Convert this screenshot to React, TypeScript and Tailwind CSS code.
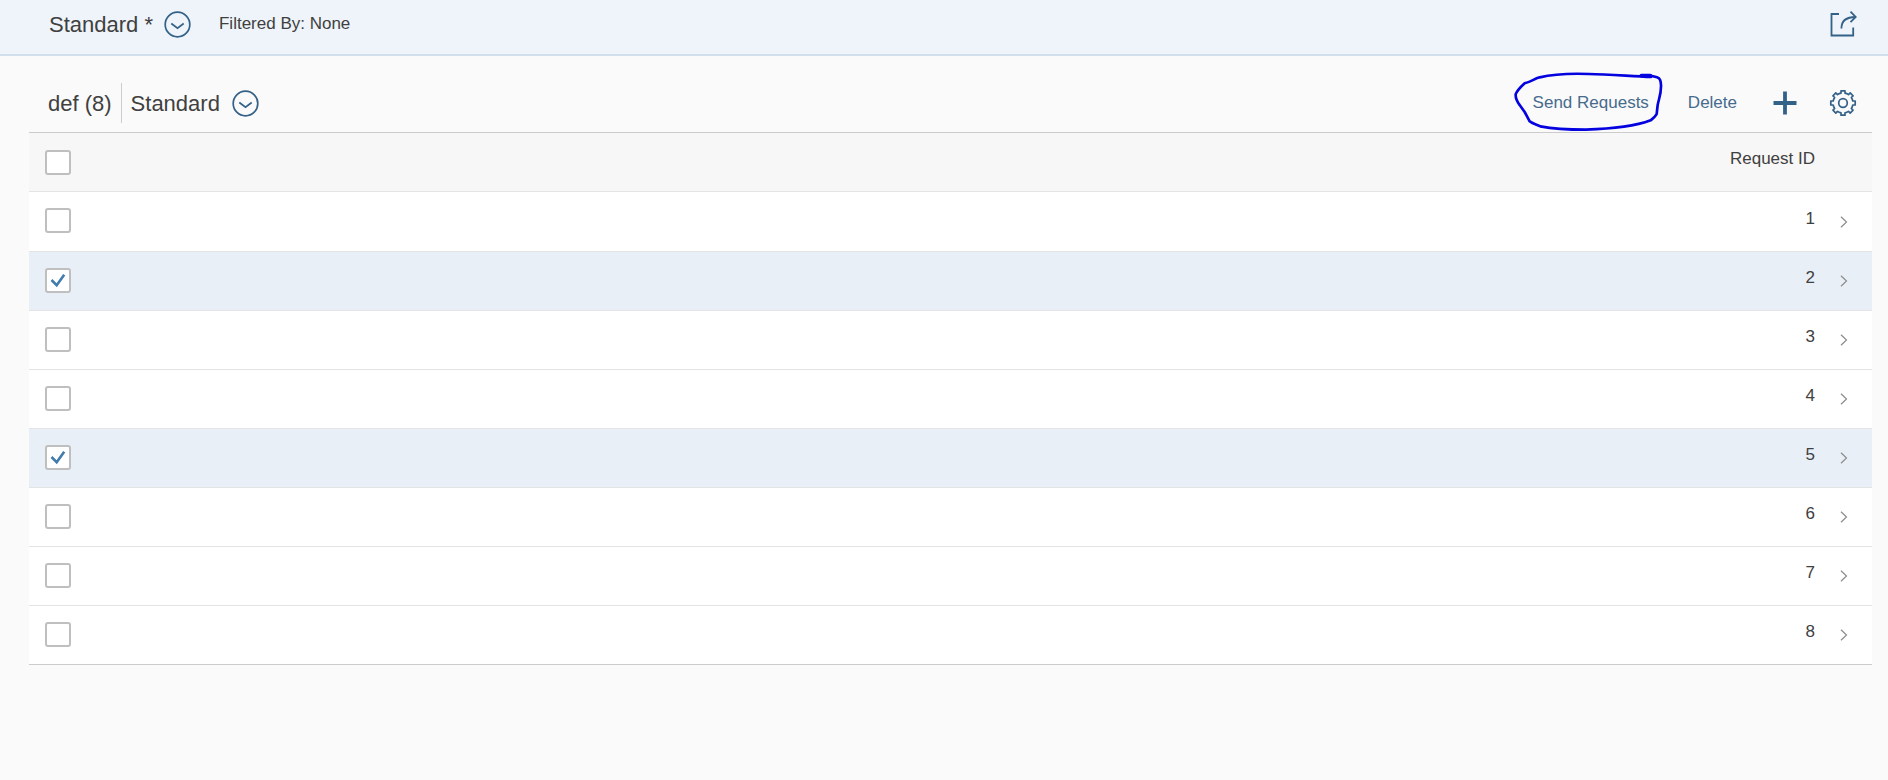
import { useState } from "react";

const INITIAL_ROWS = [
  { id: 1, selected: false },
  { id: 2, selected: true },
  { id: 3, selected: false },
  { id: 4, selected: false },
  { id: 5, selected: true },
  { id: 6, selected: false },
  { id: 7, selected: false },
  { id: 8, selected: false },
];

function VariantIcon() {
  return (
    <svg
      viewBox="0 0 27 27"
      className="size-[27px]"
      fill="none"
      stroke="currentColor"
      strokeWidth="1.7"
    >
      <circle cx="13.5" cy="13.5" r="12.3" />
      <path d="M7.3 12.500l6.200 4.700 6.200-4.700" />
    </svg>
  );
}

function ShareIcon() {
  return (
    <svg
      viewBox="0 0 28 28"
      className="size-7"
      fill="none"
      stroke="currentColor"
      strokeWidth="1.8"
    >
      <path d="M10 4H2.500v21.500h21.700v-8" />
      <path d="M12.400 18.500C12.400 11.500 17 7 26.500 7" />
      <path d="M21.500 1.600l5.200 5.400-5.200 5.200" />
    </svg>
  );
}

function PlusIcon() {
  return (
    <svg
      viewBox="0 0 24 24"
      className="size-6"
      fill="none"
      stroke="currentColor"
      strokeWidth="3.8"
    >
      <path d="M12 .5v23M.5 12h23" />
    </svg>
  );
}

function GearIcon() {
  return (
    <svg
      viewBox="0 0 28 28"
      className="size-7"
      fill="none"
      stroke="currentColor"
      strokeWidth="1.7"
      strokeLinejoin="round"
    >
      <path d="M12 4.200V1.800H16V4.200A10 10 0 0 1 19.520 5.660L21.210 3.960 24.040 6.790 22.340 8.480A10 10 0 0 1 23.800 12H26.200V16H23.800A10 10 0 0 1 22.340 19.520L24.040 21.210 21.210 24.040 19.520 22.340A10 10 0 0 1 16 23.800V26.200H12V23.800A10 10 0 0 1 8.480 22.340L6.790 24.040 3.960 21.210 5.660 19.520A10 10 0 0 1 4.200 16H1.800V12H4.200A10 10 0 0 1 5.660 8.480L3.960 6.790 6.790 3.960 8.480 5.660A10 10 0 0 1 12 4.200Z" />
      <circle cx="14" cy="14" r="4.300" />
    </svg>
  );
}

// Freehand ring drawn round the send button
function Marker() {
  return (
    <svg
      viewBox="0 0 540 240"
      className="pointer-events-none absolute -top-[23px] -left-[34px] h-20 w-[180px] max-w-none"
      fill="none"
      stroke="#0502e0"
      strokeWidth="8"
      strokeLinecap="round"
      strokeLinejoin="round"
    >
      <path d="M456 51C400 49 330 43 270 42C215 40 160 43 122 52C105 57 96 65 77 70C66 80 55 90 50 103C49 118 56 127 62 135L77 156L92 184C100 191 112 193 124 199C165 207 215 209 260 209C330 207 400 202 455 181C464 174 470 168 473 162L476 135C480 115 487 100 486 75C485 62 484 55 474 52L456 47" />
      <path d="M427 47h27" strokeWidth="11" />
    </svg>
  );
}

type CheckBoxProps = {
  label: string;
  checked: boolean;
  onChange: (checked: boolean) => void;
};

function CheckBox({ label, checked, onChange }: CheckBoxProps) {
  return (
    <label className="relative block h-[25px] w-[26px]">
      <input
        type="checkbox"
        aria-label={label}
        checked={checked}
        onChange={(e) => onChange(e.target.checked)}
        className="block h-full w-full appearance-none rounded-[3px] border-2 border-[#bfbfbf] bg-white"
      />
      {checked && (
        <svg
          viewBox="0 0 26 25"
          className="pointer-events-none absolute inset-0"
          fill="none"
          stroke="#427cac"
          strokeWidth="2.6"
        >
          <path d="M6.500 12l5.200 5.200L19.200 6.800" />
        </svg>
      )}
    </label>
  );
}

export default function App() {
  const [rows, setRows] = useState(INITIAL_ROWS);

  const toggle = (id: number, selected: boolean) =>
    setRows(rows.map((row) => (row.id === id ? { ...row, selected } : row)));

  return (
    <div className="min-h-screen bg-[#fafafa] font-['Liberation_Sans',Arial,sans-serif] text-[17px] text-[#404040]">
      <header className="flex h-14 items-center border-b-2 border-[#d1e0ec] bg-[#eef4f9] pr-[31px] pb-1.5 pl-[49px]">
        <h1 className="text-[22px]">Standard *</h1>
        <button aria-label="Select view" className="ml-[11px] text-[#346187]">
          <VariantIcon />
        </button>
        <p className="ml-7">Filtered By: None</p>
        <button aria-label="Share" className="ml-auto text-[#346187]">
          <ShareIcon />
        </button>
      </header>

      <main className="pr-4 pl-[29px]">
        <div className="flex h-19 items-center pt-[18px] pr-[15px] pl-[19px]">
          <h2 className="text-[22px]">def (8)</h2>
          <div className="ml-[9px] h-10 w-px bg-[#ccc]" />
          <h3 className="ml-[9px] text-[22px]">Standard</h3>
          <button aria-label="Select table view" className="ml-3 text-[#346187]">
            <VariantIcon />
          </button>
          <div className="ml-auto flex items-center text-[#346187]">
            <div className="relative mr-[39px]">
              <button className="block h-10 text-[#466b8d]">Send Requests</button>
              <Marker />
            </div>
            <button className="mr-9 h-10 text-[#466b8d]">Delete</button>
            <button aria-label="Add" className="mr-8">
              <PlusIcon />
            </button>
            <button aria-label="Settings">
              <GearIcon />
            </button>
          </div>
        </div>

        <table className="w-full border-separate border-spacing-0">
          <thead>
            <tr className="h-[60px] bg-[#f7f7f7]">
              <th className="w-[58px] border-t border-b border-t-[#ccc] border-b-[#e4e4e4] p-0 pl-4">
                <CheckBox
                  label="Select all"
                  checked={rows.every((row) => row.selected)}
                  onChange={(selected) =>
                    setRows(rows.map((row) => ({ ...row, selected })))
                  }
                />
              </th>
              <th className="border-t border-b border-t-[#ccc] border-b-[#e4e4e4] p-0 pb-1.5 text-right font-normal">
                Request ID
              </th>
              <th className="w-[57px] border-t border-b border-t-[#ccc] border-b-[#e4e4e4] p-0" />
            </tr>
          </thead>
          <tbody>
            {rows.map(({ id, selected }) => (
              <tr
                key={id}
                className={`group h-[59px] first:h-[60px] ${selected ? "bg-[#e8eff7]" : "bg-white"}`}
              >
                <td className="border-b border-[#e4e4e4] p-0 pb-0.5 pl-4 group-last:border-[#ccc]">
                  <CheckBox
                    label={`Select request ${id}`}
                    checked={selected}
                    onChange={(value) => toggle(id, value)}
                  />
                </td>
                <td className="border-b border-[#e4e4e4] p-0 pb-1.5 text-right group-last:border-[#ccc]">
                  {id}
                </td>
                <td className="border-b border-[#e4e4e4] p-0 group-last:border-[#ccc]">
                  <svg
                    viewBox="0 0 8 12"
                    className="mx-auto h-3 w-2"
                    fill="none"
                    stroke="#8c8c8c"
                    strokeWidth="1.2"
                  >
                    <path d="M1 .7L6.500 6 1 11.300" />
                  </svg>
                </td>
              </tr>
            ))}
          </tbody>
        </table>
      </main>
    </div>
  );
}
